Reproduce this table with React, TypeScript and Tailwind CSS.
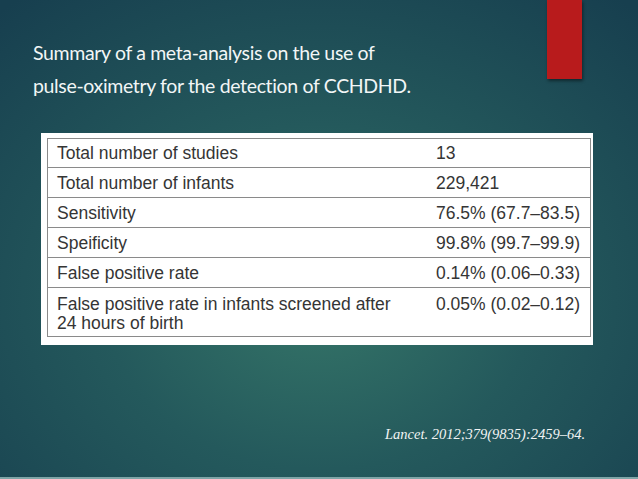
import React from 'react';

// 표 데이터
const rows: { label: React.ReactNode; value: string; h: string }[] = [
  { label: 'Total number of studies', value: '13', h: 'h-[29px]' },
  { label: 'Total number of infants', value: '229,421', h: 'h-[30px]' },
  { label: 'Sensitivity', value: '76.5% (67.7–83.5)', h: 'h-[30px]' },
  { label: 'Speificity', value: '99.8% (99.7–99.9)', h: 'h-[30px]' },
  { label: 'False positive rate', value: '0.14% (0.06–0.33)', h: 'h-[30px]' },
];

function SummaryTable() {
  return (
    <div className="ml-[41px] mt-[31px] w-[552px] h-[212px] bg-white pt-[5px] pl-[6px] pr-[2px] pb-[3px]">
      <div className="w-[544px] border border-[#8a8a8a] text-[#353535] text-[17.5px] font-['Liberation_Sans',Arial,sans-serif]">
        {rows.map((row, i) => (
          <div key={i} className={`flex items-center border-b border-[#8a8a8a] ${row.h}`}>
            <div className="w-[378px] pl-[9px] leading-[20px]">{row.label}</div>
            <div className="pl-[10px] leading-[20px]">{row.value}</div>
          </div>
        ))}
        <div className="flex h-[48px] pt-[7px]">
          <div className="w-[378px] pl-[9px] leading-[19px]">
            False positive rate in infants screened after
            <br />
            24 hours of birth
          </div>
          <div className="pl-[10px] leading-[19px]">0.05% (0.02–0.12)</div>
        </div>
      </div>
    </div>
  );
}

export default function App() {
  return (
    <div className="relative w-[638px] h-[479px] overflow-hidden flex flex-col bg-[radial-gradient(ellipse_75%_80%_at_50%_62%,#357568_0%,#24595c_45%,#173f4f_100%)]">
      {/* 오른쪽 위 빨간 막대 */}
      <div className="absolute left-[547px] top-0 w-[35px] h-[79px] bg-[#b81b1c] shadow-[1px_2px_3px_rgba(0,0,0,0.45)]" />

      <h1 className="pl-[33px] pt-[36px] text-[#f2f6f6] text-[19.5px] tracking-[-0.35px] leading-[33px] font-['Lato','Open_Sans',sans-serif] font-normal">
        Summary of a meta-analysis on the use of
        <br />
        pulse-oximetry for the detection of CCHDHD.
      </h1>

      <SummaryTable />

      <p className="mt-[80px] pl-[385px] text-[#f2f4f4] text-[14.5px] italic leading-[18px] font-['Liberation_Serif','Times_New_Roman',serif]">
        Lancet. 2012;379(9835):2459–64.
      </p>

      <div className="mt-auto h-[2px] bg-[#7fa5a7]" />
    </div>
  );
}
